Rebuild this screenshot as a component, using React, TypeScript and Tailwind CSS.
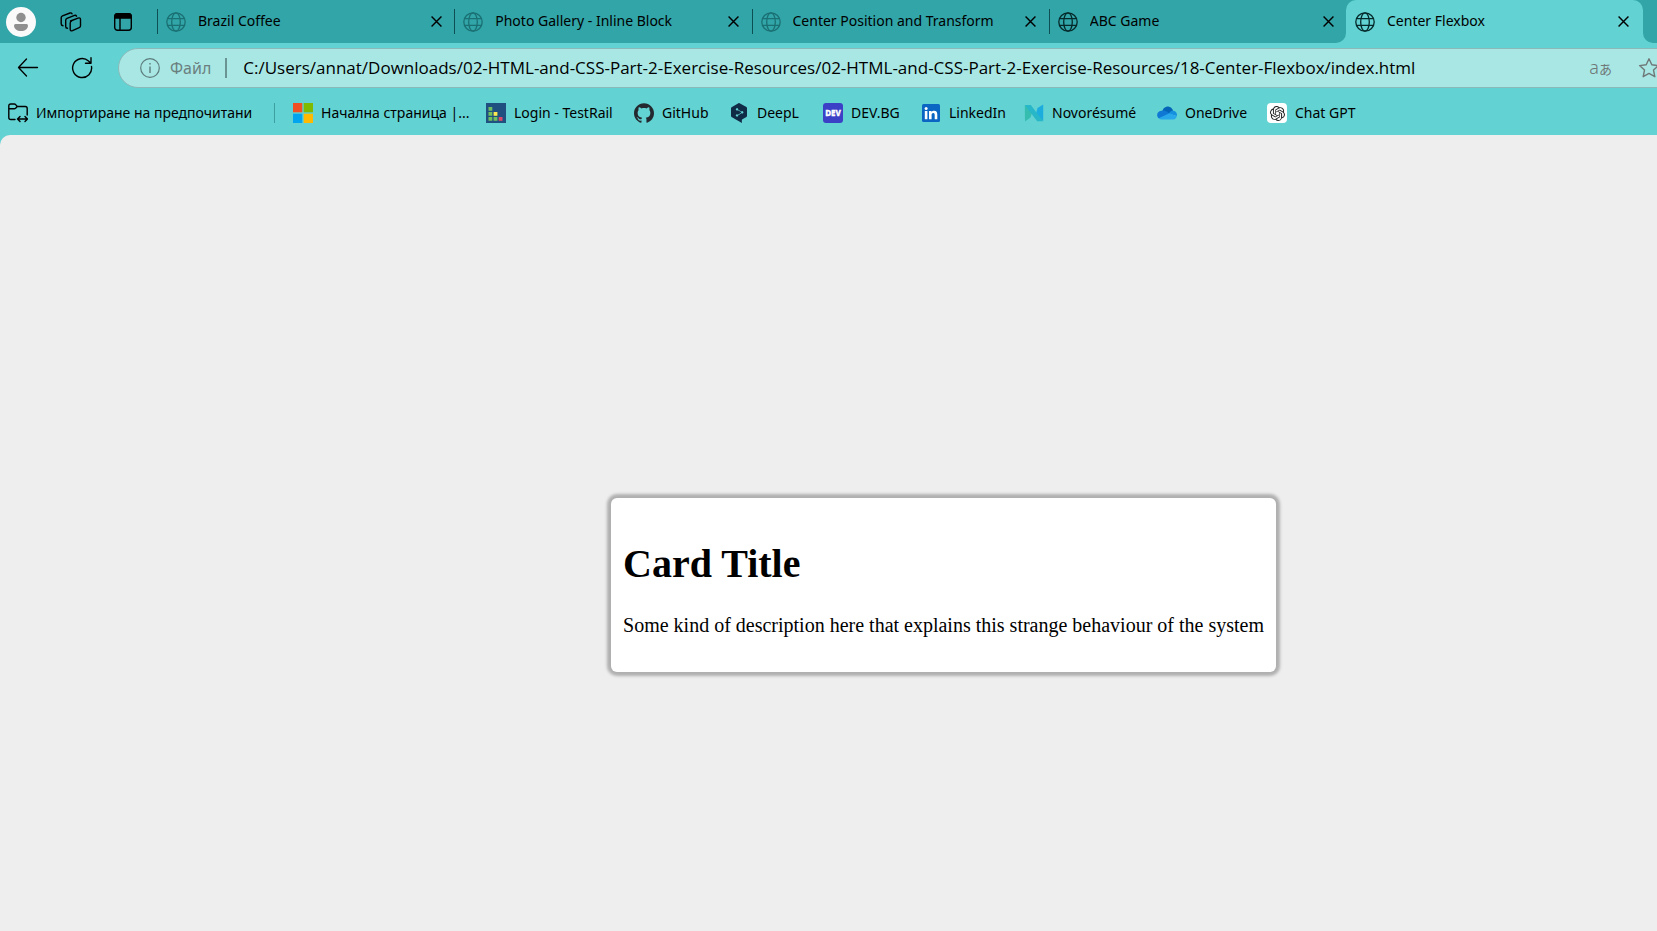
import type { ReactNode } from "react";
import { SiGithub, SiOpenai, SiDeepl } from "react-icons/si";

function Globe({ className }: { className: string }) {
  return (
    <svg viewBox="0 0 20 20" className={`size-5 shrink-0 ${className}`} fill="none" stroke="currentColor" strokeWidth="1.3" aria-hidden="true">
      <circle cx="10" cy="10" r="9.2" />
      <ellipse cx="10" cy="10" rx="4.3" ry="9.2" />
      <path d="M1.6 6.6h16.8M1.6 13.4h16.8" />
    </svg>
  );
}

function CloseIcon() {
  return (
    <svg viewBox="0 0 10 10" className="size-[11px]" fill="none" stroke="currentColor" strokeWidth="1.3" aria-hidden="true">
      <path d="M.5.5l9 9M9.5.5l-9 9" />
    </svg>
  );
}

function Tab({ title, dim }: { title: string; dim?: boolean }) {
  return (
    <div className="flex h-full min-w-0 flex-1 items-center">
      <span className="h-[25px] w-px shrink-0 bg-[#0d4f52]" />
      <Globe className={`ml-2 mt-px ${dim ? "text-[#1b7073]" : "text-[#06292b]"}`} />
      <a href="#tab" className="ml-3 min-w-0 flex-1 truncate pb-0.5">{title}</a>
      <button type="button" aria-label={`Close ${title}`} className="mr-2.5 flex size-4 items-center justify-center">
        <CloseIcon />
      </button>
    </div>
  );
}

const bookmarks: { label: string; width: string; icon: ReactNode }[] = [
  {
    label: "Начална страница |...",
    width: "w-[193px]",
    icon: (
      <svg viewBox="0 0 20 20" className="size-5">
        <path fill="#f25022" d="M0 0h9.3v9.3H0z" />
        <path fill="#7fba00" d="M10.7 0H20v9.3h-9.3z" />
        <path fill="#00a4ef" d="M0 10.7h9.3V20H0z" />
        <path fill="#ffb900" d="M10.7 10.7H20V20h-9.3z" />
      </svg>
    ),
  },
  {
    label: "Login - TestRail",
    width: "w-[148px]",
    icon: (
      <svg viewBox="0 0 20 20" className="size-5">
        <path fill="#20507f" d="M0 0h20v20H0z" />
        <path fill="#6fbf5f" d="M2.500 4h3.800v3.800h-3.800zM2.500 9h3.800v3.800h-3.800zM2.500 14h3.800v3.800h-3.800zM7.600 14h3.800v3.800h-3.800z" />
        <path fill="#ffe84d" d="M7.600 9h3.800v3.800h-3.800z" />
        <path fill="#dc4a68" d="M12.700 14h3.800v3.800h-3.800z" />
      </svg>
    ),
  },
  { label: "GitHub", width: "w-[95px]", icon: <SiGithub className="size-5 text-[#24292f]" /> },
  { label: "DeepL", width: "w-[94px]", icon: <SiDeepl className="size-5 text-[#0f2b46]" /> },
  {
    label: "DEV.BG",
    width: "w-[98px]",
    icon: (
      <svg viewBox="0 0 20 20" className="size-5">
        <rect width="20" height="20" rx="3" fill="#3b40c6" />
        <text x="10" y="12.700" textAnchor="middle" fill="#fff" stroke="#fff" strokeWidth=".3" className="font-['Noto_Sans',sans-serif] text-[8px] font-extrabold">
          DEV
        </text>
      </svg>
    ),
  },
  {
    label: "LinkedIn",
    width: "w-[103px]",
    icon: (
      <svg viewBox="0 0 20 20" className="size-5">
        <rect x="1" y="1" width="18" height="18" rx="1.5" fill="#0a66c2" />
        <g fill="#fff">
          <circle cx="5.1" cy="5.4" r="1.5" />
          <path d="M3.8 8h2.6v8.2H3.8zM8 8h2.5v1.1c.5-.8 1.4-1.3 2.6-1.3 2.5 0 3.2 1.6 3.2 3.9v4.5h-2.6v-4c0-1.1-.1-2.2-1.4-2.2-1.4 0-1.7 1-1.7 2.2v4H8z" />
        </g>
      </svg>
    ),
  },
  {
    label: "Novorésumé",
    width: "w-[133px]",
    icon: (
      <svg viewBox="0 0 20 20" className="size-5">
        <path fill="#35bdb0" d="M.8 2 8 9.500 6.500 14.500 1 18.500z" />
        <path fill="#1cadde" d="M19.200 1.500v16.800L12 10.500 13.500 5z" />
        <path fill="#27b7c8" d="M.8 2h6L19.200 18.300h-6z" />
      </svg>
    ),
  },
  {
    label: "OneDrive",
    width: "w-[110px]",
    icon: (
      <svg viewBox="0 0 20 20" className="size-5">
        <path fill="#0364b8" d="M5.500 7.500C7 4 10 3.200 12 3.800c2.200.5 3.500 2 4 4l-5 4z" />
        <path fill="#0f78d4" d="M4.500 7.700c2.500-.6 4 .1 5.500 1.100l3.500 2.200L2 15.500C-1 13-.5 8.600 4.500 7.700z" />
        <path fill="#1490df" d="M12.500 9.500c1-1.300 2.300-2 4-1.800 2.700.3 4 3 3.300 5.300l-7.300-2z" />
        <path fill="#28a8ea" d="M12.300 10.300l7.500 3c-.4 1.900-1.700 3.100-3.600 3.100H5c-1.300 0-2.300-.3-3.200-1.200z" />
      </svg>
    ),
  },
  {
    label: "Chat GPT",
    width: "w-[92px]",
    icon: (
      <span className="flex size-5 items-center justify-center rounded-[4px] bg-white">
        <SiOpenai className="size-[15px] text-[#222]" />
      </span>
    ),
  },
];

export default function App() {
  return (
    <div className="flex min-h-screen flex-col overflow-hidden bg-[#62d2d2] font-['Noto_Sans','Liberation_Sans',sans-serif] text-[14px] leading-5 text-black">
      <header>
        <div className="flex h-[43px]">
          <div className="flex min-w-0 flex-1 items-center rounded-br-[10px] bg-[#31a5a8]">
            <div className="flex w-[157px] shrink-0 items-center pl-1.5">
              <button type="button" aria-label="Profile" className="flex size-[30px] items-center justify-center rounded-full bg-[#fafafa]">
                <svg viewBox="0 0 16 20" className="h-5 w-4" fill="#8f8f8f">
                  <circle cx="8" cy="5.500" r="4.700" />
                  <path d="M1 13.500q0-1.500 1.500-1.500h11q1.500 0 1.500 1.500c0 3.500-3 5.500-7 5.500s-7-2-7-5.500z" />
                </svg>
              </button>
              <button type="button" aria-label="Workspaces" className="ml-6">
                <svg viewBox="0 0 22 20" className="h-5 w-[22px]" fill="none" stroke="currentColor" strokeWidth="1.400" strokeLinejoin="round" strokeLinecap="round">
                  <path d="M10.500 9 18 6.100q2.500-.8 2.500 1.400v6.200q0 1.400-1.300 1.900l-6.700 3q-2.300.9-2.300-1.400v-6q0-1.500 1.300-2" />
                  <path d="M7.500 16.300q-1.800-.1-1.800-1.900V8.200q0-1.400 1.300-1.900l7.500-2.900q1.500-.4 2 .8" />
                  <path d="M3 13.700q-1.800-.1-1.800-1.900V5.700q0-1.400 1.300-1.900L10 1q1.500-.4 2 .8" />
                </svg>
              </button>
              <button type="button" aria-label="Tab actions" className="ml-8">
                <svg viewBox="0 0 18 18" className="size-[18px]" fill="none" stroke="currentColor" strokeWidth="1.400">
                  <rect x=".7" y=".7" width="16.600" height="16.600" rx="2.800" />
                  <path d="M1 3q0-2.300 2.300-2.300h11.400Q17 .7 17 3v2H1z" fill="currentColor" />
                  <path d="M6 5v12" />
                </svg>
              </button>
            </div>
            <Tab title="Brazil Coffee" dim />
            <Tab title="Photo Gallery - Inline Block" dim />
            <Tab title="Center Position and Transform" dim />
            <Tab title="ABC Game" />
          </div>
          <div className="w-[297px] shrink-0 bg-linear-to-b from-[#31a5a8] from-50% to-[#62d2d2] to-50%">
            <div className="flex h-full items-center rounded-t-[10px] bg-[#62d2d2] pl-[9px]">
              <Globe className="mt-px text-[#06292b]" />
              <a href="#tab" className="ml-3 min-w-0 flex-1 truncate pb-0.5">Center Flexbox</a>
              <button type="button" aria-label="Close Center Flexbox" className="mr-3 flex size-4 items-center justify-center">
                <CloseIcon />
              </button>
            </div>
          </div>
          <div className="w-3.5 shrink-0 rounded-bl-[10px] bg-[#31a5a8]" />
        </div>

        <form className="flex items-center pt-[5px]" onSubmit={(e) => e.preventDefault()}>
          <button type="button" aria-label="Back" className="ml-[17px]">
            <svg viewBox="0 0 22 20" className="h-5 w-[22px]" fill="none" stroke="currentColor" strokeWidth="1.300" strokeLinecap="round" strokeLinejoin="round">
              <path d="M9.500 1 1.500 9.500l8 8.500M1.500 9.500H20.500" />
            </svg>
          </button>
          <button type="button" aria-label="Refresh" className="ml-8">
            <svg viewBox="0 0 22 22" className="size-[22px]" fill="none" stroke="currentColor" strokeWidth="1.400" strokeLinecap="round" strokeLinejoin="round">
              <path d="M20.500 9.500A9.500 9.500 0 1 1 17.500 4l1.900 1.800M20 .7v5.500h-5.500" />
            </svg>
          </button>
          <div className="-mr-10 ml-[25px] flex h-10 flex-1 items-center rounded-full border border-[#8bb9b9] bg-[#a8e7e4] pl-[21px] pr-9">
            <svg viewBox="0 0 20 20" className="size-5 shrink-0 text-[#5d7c7c]" fill="none" stroke="currentColor" strokeWidth="1.200" aria-hidden="true">
              <circle cx="10" cy="10" r="9.300" />
              <path d="M10 8.500V15M10 5v1.500" strokeWidth="1.400" />
            </svg>
            <label htmlFor="url" className="ml-2.5 text-[16px] text-[#6b7f7f]">Файл</label>
            <span className="ml-3.5 h-5 w-0.5 bg-[#6a9494]" />
            <input
              id="url"
              className="ml-4 min-w-0 flex-1 bg-transparent font-['Open_Sans',sans-serif] text-[17px] text-black outline-none"
              defaultValue="C:/Users/annat/Downloads/02-HTML-and-CSS-Part-2-Exercise-Resources/02-HTML-and-CSS-Part-2-Exercise-Resources/18-Center-Flexbox/index.html"
            />
            <button type="button" aria-label="Translate" className="flex items-baseline text-[#6f7777]">
              <span className="text-[18px] font-light">a</span>
              <span className="font-['Noto_Sans_CJK_JP',sans-serif] text-[13px]">あ</span>
            </button>
            <button type="button" aria-label="Favourite" className="ml-[26px] shrink-0 text-[#6f7777]">
              <svg viewBox="0 0 22 22" className="size-[22px]" fill="none" stroke="currentColor" strokeWidth="1.400" strokeLinejoin="round">
                <path d="M11 1.800l2.800 6 6.600.8-4.900 4.500 1.300 6.600L11 16.400l-5.800 3.300 1.300-6.600L1.600 8.600l6.600-.8z" />
              </svg>
            </button>
          </div>
        </form>

        <nav className="flex h-[47px] items-center pb-px pl-2 pt-1">
          <a href="#import" className="flex w-[266px] items-center gap-2 whitespace-nowrap">
            <svg viewBox="0 0 20 20" className="size-5 shrink-0" fill="none" stroke="currentColor" strokeWidth="1.400" strokeLinejoin="round" strokeLinecap="round">
              <path d="M7 16.500H2.800Q.8 16.500.8 14.500V3Q.8 1 2.800 1h3.400q.8 0 1.400.6L9.300 3.500h7.900q2 0 2 2v6.500M.8 5.800h5.400q.8 0 1.400-.6l1.700-1.700" />
              <path d="M10 16h9M12 13.500 9.500 16l2.500 2.500M17 13.500l2.500 2.500-2.500 2.500" />
            </svg>
            Импортиране на предпочитани
          </a>
          <span className="mr-[18px] h-5 w-px bg-[#3d9fa0]" />
          {bookmarks.map((b) => (
            <a key={b.label} href="#bookmark" className={`flex shrink-0 items-center gap-2 whitespace-nowrap ${b.width}`}>
              <span className="shrink-0">{b.icon}</span>
              {b.label}
            </a>
          ))}
        </nav>
      </header>

      <main className="flex flex-1 items-center justify-center rounded-tl-[10px] bg-[#eeeeee] pl-[230px] pt-[104px] font-['Liberation_Serif',serif] text-black">
        <article className="rounded-md bg-white px-3 pb-[35px] pt-[39px] shadow-[0_0_3px_4px_#b0b0b0]">
          <h1 className="text-[40px] font-bold leading-[54px]">Card Title</h1>
          <p className="mt-[22px] whitespace-nowrap text-[20px] leading-6">
            Some kind of description here that explains this strange behaviour of the system
          </p>
        </article>
      </main>
    </div>
  );
}
